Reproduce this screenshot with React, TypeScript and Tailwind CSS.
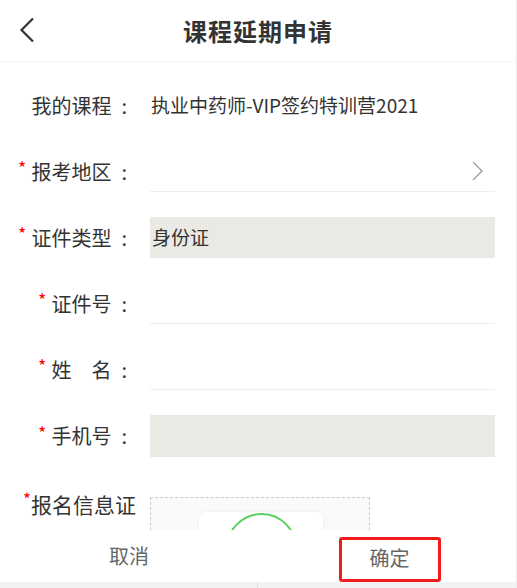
import React from 'react'

const font = { fontFamily: '"Noto Sans CJK SC", "Noto Sans", sans-serif' }

function Label({ text, required = true }: { text: string; required?: boolean }) {
  return (
    <div className="w-[150px] shrink-0 flex items-center justify-end pr-[23px] text-[20px] text-[#333]">
      {required && <span className="text-[#f00] text-[18px] mr-[5px] -mt-[8px]">*</span>}
      <span>{text}</span>
      <span className="ml-[10px]">:</span>
    </div>
  )
}

export default function App() {
  return (
    <div
      className="w-[517px] h-[588px] flex flex-col bg-white overflow-hidden border-r border-[#ececec]"
      style={font}
    >
      {/* 顶部标题栏 */}
      <div className="h-[62px] shrink-0 relative flex items-center justify-center border-b border-[#f5f5f5]">
        <svg className="absolute left-[18px] top-[17px]" width="18" height="26" viewBox="0 0 18 26">
          <polyline points="15,1.5 3.5,13 15,24.5" fill="none" stroke="#333" strokeWidth="2.2" />
        </svg>
        <h1 className="text-[24px] font-bold text-[#333] tracking-[1px]">课程延期申请</h1>
      </div>

      {/* 表单 */}
      <div className="flex-1 overflow-hidden pt-[23px] pr-[21px]">
        <div className="flex items-center h-[41px] mb-[25px]">
          <Label text="我的课程" required={false} />
          <span className="text-[19px] text-[#333] pl-[1px]">执业中药师-VIP签约特训营2021</span>
        </div>

        <div className="flex items-center h-[41px] mb-[25px]">
          <Label text="报考地区" />
          <div className="flex-1 h-full border-b border-[#eee] flex items-center justify-end pr-[12px]">
            <svg width="11" height="20" viewBox="0 0 11 20">
              <polyline points="1,1 10,10 1,19" fill="none" stroke="#999" strokeWidth="1.3" />
            </svg>
          </div>
        </div>

        <div className="flex items-center h-[41px] mb-[25px]">
          <Label text="证件类型" />
          <div className="flex-1 h-full bg-[#eae9e3] flex items-center pl-[2px] text-[19px] text-[#333]">
            身份证
          </div>
        </div>

        <div className="flex items-center h-[41px] mb-[25px]">
          <Label text="证件号" />
          <div className="flex-1 h-full border-b border-[#eee]" />
        </div>

        <div className="flex items-center h-[41px] mb-[25px]">
          <Label text={'姓\u3000名'} />
          <div className="flex-1 h-full border-b border-[#eee]" />
        </div>

        <div className="flex items-center h-[42px] mb-[24px]">
          <Label text="手机号" />
          <div className="flex-1 h-full bg-[#eae9e3]" />
        </div>

        <div className="flex items-start">
          <div className="w-[150px] shrink-0 flex items-start pl-[23px] pt-[8px] text-[21px] text-[#333] leading-[30px]">
            <span className="text-[#f00] text-[17px] leading-[20px]">*</span>
            <span>报名信息证</span>
          </div>
          <div className="mt-[16px] w-[220px] h-[150px] border border-dashed border-[#ccc] bg-[#fafafa] pl-[48px] pt-[14px]">
            <div className="w-[124px] h-[120px] bg-white rounded-[6px] shadow-[0_0_4px_rgba(0,0,0,0.06)] flex justify-center pt-[1px]">
              <div className="w-[71px] h-[71px] rounded-full border-2 border-[#5bd05b]" />
            </div>
          </div>
        </div>
      </div>

      {/* 底部按钮 */}
      <div className="shrink-0 flex flex-col bg-white">
        <div className="h-[52px] flex">
          <button className="w-[258px] flex items-center justify-center text-[20px] text-[#666]">取消</button>
          <div className="flex-1 flex items-start justify-center pt-[7px] pl-[5px]">
            <button className="w-[102px] h-[45px] pb-[4px] border-[3px] border-[#f21c1c] rounded-[3px] flex items-center justify-center text-[20px] text-[#666]">
              确定
            </button>
          </div>
        </div>
        <div className="h-[6px] flex bg-[#f2f2f2]">
          <div className="w-[258px] border-r border-[#e2e2e2]" />
          <div className="flex-1" />
        </div>
      </div>
    </div>
  )
}
